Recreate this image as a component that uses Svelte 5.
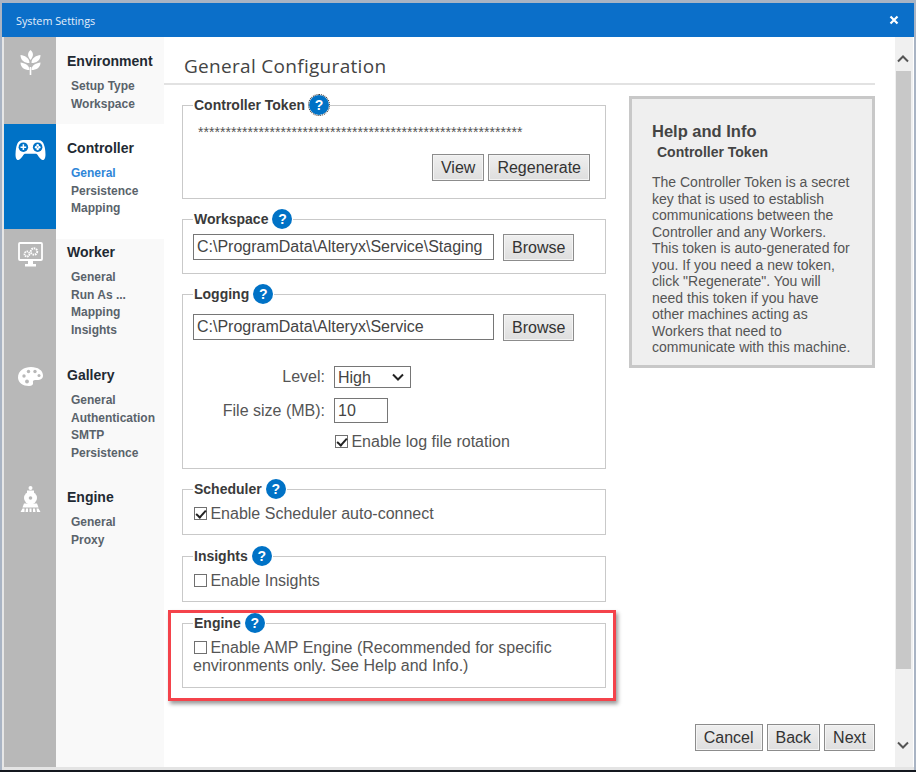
<script lang="ts">
  const sections = [
    { title: 'Environment', icon: 'plant', links: ['Setup Type', 'Workspace'] },
    { title: 'Controller', icon: 'gamepad', links: ['General', 'Persistence', 'Mapping'], active: true },
    { title: 'Worker', icon: 'monitor', links: ['General', 'Run As ...', 'Mapping', 'Insights'] },
    { title: 'Gallery', icon: 'palette', links: ['General', 'Authentication', 'SMTP', 'Persistence'] },
    { title: 'Engine', icon: 'engine', links: ['General', 'Proxy'] }
  ];

  const helpText =
    'The Controller Token is a secret key that is used to establish communications between the Controller and any Workers. This token is auto-generated for you. If you need a new token, click "Regenerate". You will need this token if you have other machines acting as Workers that need to communicate with this machine.';

  let level = $state('High');
</script>

{#snippet help(focused = false)}
  <span class="help" class:focused>?</span>
{/snippet}

<div class="screen">
  <header class="titlebar">
    <span>System Settings</span>
    <svg class="close" viewBox="0 0 10 10" width="10" height="10">
      <path d="M1.5 1.5l7 7M8.5 1.5l-7 7" stroke="#fff" stroke-width="2.2" />
    </svg>
  </header>

  <div class="content">
    <nav class="sidebar">
      {#each sections as section, i}
        <section class="group" class:active={section.active} class:after-active={i === 2}>
          <div class="rail">
            {#if section.icon === 'plant'}
              <svg class="icon plant" viewBox="0 0 21 25" width="21" height="25" fill="#fff">
                <path d="M10.500 0c3 2.500 3.500 6 0 10c-3.500-4-3-7.500 0-10z" />
                <path d="M.5 5c4 .5 9 2.500 9 8c-5 0-9-2.500-9-8zM20.500 5c-4 .5-9 2.500-9 8c5 0 9-2.500 9-8z" />
                <path d="M.5 12.500c4 .5 9 2.500 9 7.500c-5 0-9-2.500-9-7.500zM20.500 12.500c-4 .5-9 2.500-9 7.500c5 0 9-2.500 9-7.500z" />
                <path d="M9.700 17h1.600v8h-1.600z" />
              </svg>
            {:else if section.icon === 'gamepad'}
              <svg class="icon gamepad" viewBox="0 0 32 21" width="31" height="20">
                <path fill="#fff" d="M8 0h16c4 0 6 3 7 8c1 5 1.500 13-2 13c-3 0-5-5.500-7-6.500H10c-2 1-4 6.500-7 6.500c-3.500 0-3-8-2-13c1-5 3-8 7-8z" />
                <circle cx="8.500" cy="7.500" r="5" fill="#0072c6" />
                <circle cx="23.500" cy="7.500" r="5" fill="#0072c6" />
                <path d="M8.500 4.500v6M5.500 7.500h6" stroke="#fff" stroke-width="1.600" />
                <circle cx="21.800" cy="7.500" r="1.300" fill="#fff" />
                <circle cx="25.200" cy="7.500" r="1.300" fill="#fff" />
                <circle cx="23.500" cy="5.500" r="1.300" fill="#fff" />
                <circle cx="23.500" cy="9.500" r="1.300" fill="#fff" />
              </svg>
            {:else if section.icon === 'monitor'}
              <svg class="icon monitor" viewBox="0 0 25 25" width="25" height="25">
                <rect x="1" y="1" width="23" height="17" rx="1" fill="none" stroke="#fff" stroke-width="1.800" />
                <circle cx="9" cy="12" r="2.500" fill="none" stroke="#fff" stroke-width="1.800" stroke-dasharray="1.500 .7" />
                <circle cx="16" cy="9.500" r="3.200" fill="none" stroke="#fff" stroke-width="2" stroke-dasharray="1.600 .8" />
                <path fill="#fff" d="M10 19h5v3h3v2.500H7V22h3z" />
              </svg>
            {:else if section.icon === 'palette'}
              <svg class="icon palette" viewBox="0 0 25 19" width="25" height="19">
                <path fill="#fff" d="M13 0c7 0 12 3.500 12 8.500c0 4-4 5-7 4.500c-2.500-.4-3.500 1-3 2.500c.5 2-1 3.500-4 3.500C5 19 0 15.500 0 10.500C0 4 6 0 13 0z" />
                <circle cx="6" cy="9" r="1.700" fill="#b8b8b8" />
                <circle cx="10.500" cy="4.500" r="1.700" fill="#b8b8b8" />
                <circle cx="17" cy="4.500" r="1.700" fill="#b8b8b8" />
                <circle cx="21" cy="8.500" r="1.500" fill="#b8b8b8" />
                <circle cx="9" cy="14.500" r="1.900" fill="#b8b8b8" />
              </svg>
            {:else}
              <svg class="icon engine" viewBox="0 0 21 26" width="21" height="26">
                <circle cx="10.500" cy="2" r="2" fill="#fff" />
                <path fill="#fff" d="M7 4.500h7V7H7z" />
                <circle cx="10.500" cy="12" r="6.500" fill="#fff" />
                <circle cx="10.500" cy="12" r="1.800" fill="#b8b8b8" />
                <path fill="#fff" d="M4 17.500h13l1.500 4h-16z" />
                <path fill="#fff" d="M2.500 22.500h2v3.500H.5zM6 22.500h2V26H5.500zM9.500 22.500h2V26h-2zM13 22.500h2l.5 3.500h-2.500zM16.500 22.500h2l2 3.500h-3.500z" />
              </svg>
            {/if}
          </div>
          <div class="links">
            <h3>{section.title}</h3>
            <ul>
              {#each section.links as link, j}
                <li class:current={section.active && j === 0}>{link}</li>
              {/each}
            </ul>
          </div>
        </section>
      {/each}
    </nav>

    <main class="main">
      <h1>General Configuration</h1>

      <div class="columns">
        <form class="form">
          <fieldset class="token">
            <legend>Controller Token {@render help(true)}</legend>
            <div class="stars">{'*'.repeat(59)}</div>
            <div class="actions">
              <button type="button">View</button>
              <button type="button">Regenerate</button>
            </div>
          </fieldset>

          <fieldset class="workspace">
            <legend>Workspace {@render help()}</legend>
            <div class="path-row">
              <input class="path" type="text" value="C:\ProgramData\Alteryx\Service\Staging" />
              <button type="button">Browse</button>
            </div>
          </fieldset>

          <fieldset class="logging">
            <legend>Logging {@render help()}</legend>
            <div class="path-row">
              <input class="path" type="text" value="C:\ProgramData\Alteryx\Service" />
              <button type="button">Browse</button>
            </div>
            <div class="settings">
              <label for="level">Level:</label>
              <div class="select-wrap">
                <select id="level" bind:value={level}>
                  <option>High</option>
                  <option>Medium</option>
                  <option>Low</option>
                </select>
                <svg viewBox="0 0 12 8" width="12" height="8">
                  <path d="M1 1.500l5 5 5-5" fill="none" stroke="#222" stroke-width="2" />
                </svg>
              </div>
              <label for="size">File size (MB):</label>
              <input id="size" class="size" type="text" value="10" />
              <span></span>
              <label class="check"><input type="checkbox" checked /> Enable log file rotation</label>
            </div>
          </fieldset>

          <fieldset class="single">
            <legend>Scheduler {@render help()}</legend>
            <label class="check"><input type="checkbox" checked /> Enable Scheduler auto-connect</label>
          </fieldset>

          <fieldset class="single insights">
            <legend>Insights {@render help()}</legend>
            <label class="check"><input type="checkbox" /> Enable Insights</label>
          </fieldset>

          <div class="marked">
            <fieldset class="single">
              <legend>Engine {@render help()}</legend>
              <label class="check"><input type="checkbox" /> Enable AMP Engine (Recommended for specific environments only. See Help and Info.)</label>
            </fieldset>
            <div class="redbox"></div>
          </div>
        </form>

        <aside class="info">
          <h2>Help and Info</h2>
          <h4>Controller Token</h4>
          <p>{helpText}</p>
        </aside>
      </div>

      <footer class="footer">
        <button type="button">Cancel</button>
        <button type="button">Back</button>
        <button type="button">Next</button>
      </footer>
    </main>

    <div class="scrollbar">
      <svg viewBox="0 0 12 8" width="12" height="8"><path d="M1 6.500l5-5 5 5" fill="none" stroke="#555" stroke-width="2" /></svg>
      <div class="thumb"></div>
      <svg viewBox="0 0 12 8" width="12" height="8"><path d="M1 1.500l5 5 5-5" fill="none" stroke="#555" stroke-width="2" /></svg>
    </div>
  </div>
</div>

<style>
  :global(body) {
    margin: 0;
    background: #111;
  }
  .screen {
    width: 916px;
    height: 772px;
    box-sizing: border-box;
    padding: 3px 2px 0;
    background: #a9b4c4;
    border-bottom: 2px solid #14181f;
    display: flex;
    flex-direction: column;
    font-family: "Liberation Sans", Arial, sans-serif;
    color: #555;
  }
  .titlebar {
    height: 34px;
    flex: none;
    background: #0b6fc9;
    color: #e4eefa;
    font-family: "Open Sans", sans-serif;
    font-size: 10.8px;
    display: flex;
    align-items: center;
    justify-content: space-between;
    padding: 0 15px 0 14px;
  }
  .content {
    height: 730px;
    flex: none;
    display: flex;
    background: #fff;
    border-left: 2px solid #e6e6e6;
    border-bottom: 3px solid #e4e4e4;
    box-sizing: content-box;
  }

  .sidebar {
    width: 160px;
    flex: none;
    display: grid;
    grid-template-rows: 87px 105px 122px 122px 1fr;
  }
  .group {
    display: flex;
  }
  .rail {
    width: 52px;
    flex: none;
    background: #b8b8b8;
    display: flex;
    justify-content: center;
    align-items: flex-start;
  }
  .group.active .rail {
    background: #0072c6;
  }
  .icon { display: block; }
  .plant { margin-top: 13px; }
  .gamepad { margin-top: 16px; }
  .monitor { margin-top: 13px; }
  .palette { margin-top: 16px; }
  .engine { margin-top: 13px; }
  .links {
    flex: 1;
    background: #f9f9f9;
    padding: 14px 0 0 11px;
  }
  .group.active .links {
    background: #fff;
  }
  .group.after-active .links {
    border-top: 10px solid #fff;
    padding-top: 3px;
  }
  .links h3 {
    margin: 0;
    font-size: 14px;
    line-height: 20px;
    color: #1f2a33;
  }
  .links ul {
    list-style: none;
    margin: 7px 0 0;
    padding: 0 0 0 4px;
  }
  .links li {
    font-size: 12px;
    font-weight: bold;
    line-height: 17.5px;
    color: #5a636b;
  }
  .links li.current {
    color: #2f86d8;
  }

  .main {
    width: 731px;
    flex: none;
    display: flex;
    flex-direction: column;
  }
  h1 {
    flex: none;
    margin: 0 20px 0 0;
    height: 48px;
    box-sizing: border-box;
    padding: 16px 0 0 20px;
    border-bottom: 2px solid #e2e2e2;
    font-family: "Open Sans", sans-serif;
    font-size: 19px;
    font-weight: 400;
    line-height: 26px;
    letter-spacing: 0.3px;
    color: #444;
  }
  .columns {
    flex: none;
    display: flex;
    gap: 23px;
    padding: 10px 0 0 18px;
  }
  .form {
    width: 424px;
    flex: none;
    display: flex;
    flex-direction: column;
    gap: 10px;
  }
  fieldset {
    margin: 0;
    padding: 0 15px 0 10px;
    border: 1px solid #c9c9c9;
    min-width: 0;
  }
  legend {
    padding: 0 1px;
    display: flex;
    align-items: center;
    gap: 4px;
    height: 20px;
    font-size: 14px;
    font-weight: bold;
    color: #3a3a3a;
  }
  .help {
    width: 20px;
    height: 20px;
    border-radius: 50%;
    background: #0072c6;
    color: #fff;
    font-size: 14px;
    font-weight: bold;
    line-height: 20px;
    text-align: center;
  }
  .help.focused {
    outline: 1px dotted #222;
    outline-offset: 0;
  }
  .stars {
    margin: 9px 0 0 5px;
    font-size: 14px;
    line-height: 16px;
    letter-spacing: 0.05px;
    color: #555;
    white-space: nowrap;
  }
  .actions {
    display: flex;
    justify-content: flex-end;
    gap: 4px;
    margin-top: 14px;
  }
  .token { padding-bottom: 17px; }
  .workspace { padding-top: 5px; padding-bottom: 12px; }
  .logging { padding-top: 10px; padding-bottom: 17px; }
  .single { padding-top: 6px; padding-bottom: 11px; }
  .insights { margin-top: 1px; }

  button {
    height: 27px;
    box-sizing: border-box;
    padding: 0 8px;
    background: linear-gradient(#efefef, #dedede);
    border: 1px solid #8c8c8c;
    box-shadow: inset 0 0 0 1px #f4f4f4;
    font: 16px "Liberation Sans", Arial, sans-serif;
    color: #333;
  }
  input[type="text"], select {
    box-sizing: border-box;
    border: 1px solid #767676;
    border-radius: 0;
    background: #fff;
    font: 16px "Liberation Sans", Arial, sans-serif;
    color: #444;
    padding: 0 3px;
    outline: none;
  }
  .path-row {
    display: flex;
    align-items: flex-start;
    gap: 9px;
  }
  .path {
    width: 301px;
    height: 26px;
  }
  .settings {
    display: grid;
    grid-template-columns: 132px auto;
    column-gap: 9px;
    row-gap: 10px;
    margin-top: 25px;
    align-items: center;
    justify-items: start;
    font-size: 16px;
  }
  .settings > label:not(.check) {
    justify-self: end;
  }
  .select-wrap {
    position: relative;
    width: 77px;
    height: 22px;
  }
  .select-wrap select {
    width: 100%;
    height: 100%;
    appearance: none;
  }
  .select-wrap svg {
    position: absolute;
    right: 7px;
    top: 7px;
    pointer-events: none;
  }
  .size {
    width: 54px;
    height: 25px;
  }
  .check {
    font-size: 16px;
    line-height: 18px;
    display: block;
    color: #555;
  }
  .check input {
    appearance: none;
    position: relative;
    width: 13px;
    height: 13px;
    margin: 0 -1px 0 1px;
    vertical-align: -1px;
    background: #fff;
    border: 1px solid #707070;
    box-sizing: border-box;
  }
  .check input:checked::after {
    content: "";
    position: absolute;
    left: 3px;
    top: 0;
    width: 4px;
    height: 8px;
    border: solid #222;
    border-width: 0 2px 2px 0;
    transform: rotate(42deg);
  }
  .marked {
    position: relative;
    margin-top: 1px;
  }
  .marked .single {
    padding-bottom: 12px;
  }
  .redbox {
    position: absolute;
    left: -14px;
    right: -10px;
    top: -3px;
    bottom: -13px;
    border: 3px solid #f4434b;
    box-shadow: 2px 3px 4px rgba(0, 0, 0, 0.4);
    pointer-events: none;
  }

  .info {
    width: 246px;
    height: 272px;
    flex: none;
    box-sizing: border-box;
    margin-top: 1px;
    padding: 22px 18px 0 20px;
    background: #efefef;
    border: 3px solid #c8c8c8;
    color: #555;
  }
  .info h2 {
    margin: 0;
    font-size: 16.5px;
    line-height: 20px;
    color: #444;
  }
  .info h4 {
    margin: 2px 0 0 5px;
    font-size: 14px;
    line-height: 18px;
    color: #444;
  }
  .info p {
    margin: 13px 0 0;
    font-size: 14px;
    line-height: 16.5px;
  }

  .footer {
    margin-top: auto;
    padding: 0 20px 16px 0;
    display: flex;
    justify-content: flex-end;
    gap: 4px;
  }

  .scrollbar {
    width: 18px;
    flex: none;
    background: #f0f0f0;
    display: flex;
    flex-direction: column;
    align-items: center;
    padding-top: 18px;
    box-sizing: border-box;
  }
  .scrollbar svg {
    flex: none;
    margin-right: 2px;
  }
  .thumb {
    width: 15px;
    height: 598px;
    margin: 8px 2px 72px 0;
    background: #c8c8c8;
    flex: none;
  }
</style>
